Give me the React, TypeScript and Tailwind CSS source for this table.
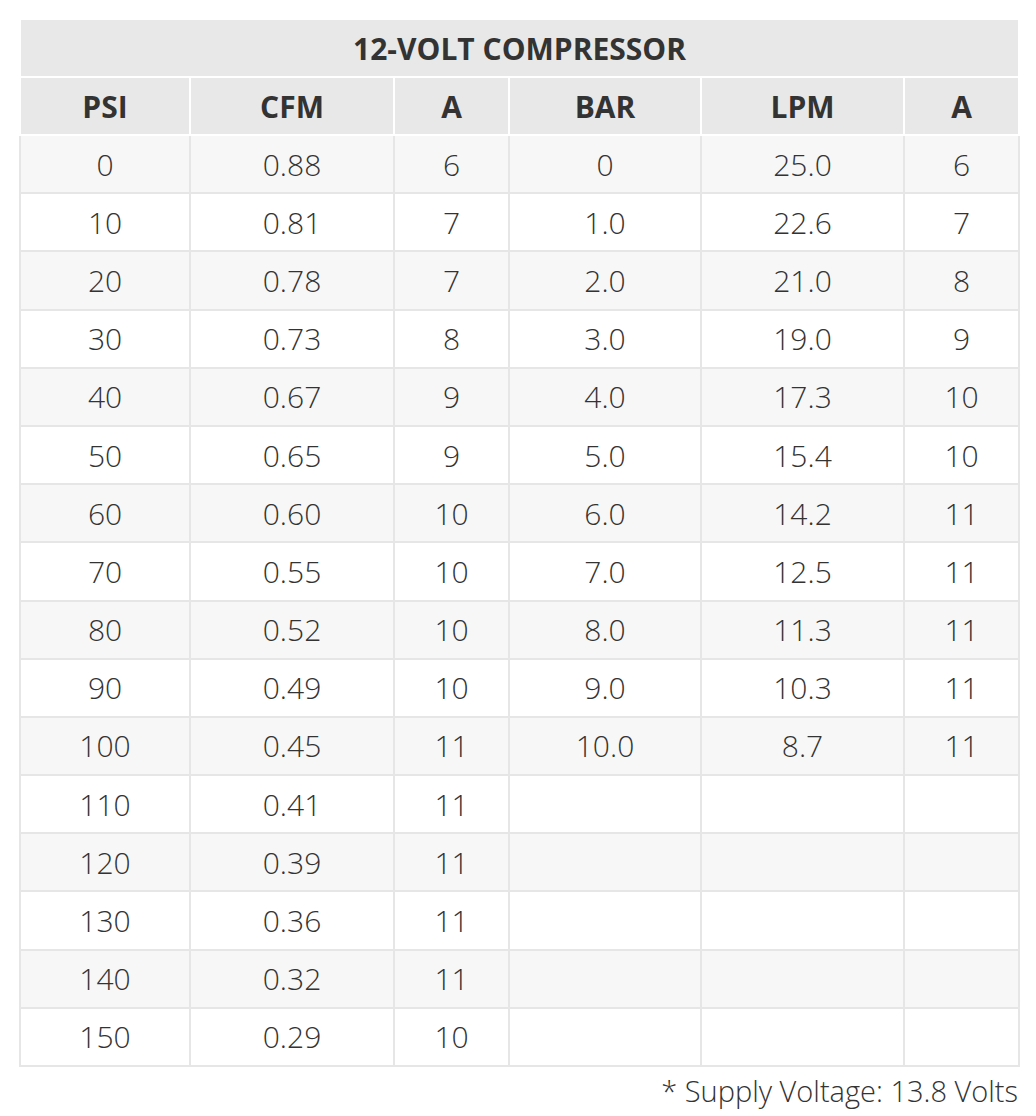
const rows: [string, string, string, string, string, string][] = [
  ['0', '0.88', '6', '0', '25.0', '6'],
  ['10', '0.81', '7', '1.0', '22.6', '7'],
  ['20', '0.78', '7', '2.0', '21.0', '8'],
  ['30', '0.73', '8', '3.0', '19.0', '9'],
  ['40', '0.67', '9', '4.0', '17.3', '10'],
  ['50', '0.65', '9', '5.0', '15.4', '10'],
  ['60', '0.60', '10', '6.0', '14.2', '11'],
  ['70', '0.55', '10', '7.0', '12.5', '11'],
  ['80', '0.52', '10', '8.0', '11.3', '11'],
  ['90', '0.49', '10', '9.0', '10.3', '11'],
  ['100', '0.45', '11', '10.0', '8.7', '11'],
  ['110', '0.41', '11', '', '', ''],
  ['120', '0.39', '11', '', '', ''],
  ['130', '0.36', '11', '', '', ''],
  ['140', '0.32', '11', '', '', ''],
  ['150', '0.29', '10', '', '', ''],
];

const headers = ['PSI', 'CFM', 'A', 'BAR', 'LPM', 'A'];

export default function App() {
  return (
    <div className="min-h-screen bg-white font-['Open_Sans',sans-serif] text-[#333333]">
      <div className="pl-[19px] pt-[18px] w-[1018px]">
        <table className="w-[999px] table-fixed border-collapse text-center text-[30px]">
          <colgroup>
            <col className="w-[170px]" />
            <col className="w-[204px]" />
            <col className="w-[115px]" />
            <col className="w-[192px]" />
            <col className="w-[203px]" />
            <col className="w-[115px]" />
          </colgroup>
          <thead>
            <tr>
              <th colSpan={6} className="h-[58px] border-2 border-white bg-[#e8e8e8] font-bold">
                12-VOLT COMPRESSOR
              </th>
            </tr>
            <tr>
              {headers.map((h, i) => (
                <th key={i} className="h-[58px] border-2 border-white bg-[#e8e8e8] font-bold">
                  {h}
                </th>
              ))}
            </tr>
          </thead>
          <tbody>
            {rows.map((r, i) => (
              <tr key={i} className={i % 2 === 0 ? 'bg-[#f7f7f7]' : 'bg-white'}>
                {r.map((c, j) => (
                  <td key={j} className="h-[58.2px] border-2 border-[#e6e6e6] font-light">
                    {c}
                  </td>
                ))}
              </tr>
            ))}
          </tbody>
        </table>
        <p className="mt-[4px] text-right text-[29px] font-light leading-[40px]">
          * Supply Voltage: 13.8 Volts
        </p>
      </div>
    </div>
  );
}
